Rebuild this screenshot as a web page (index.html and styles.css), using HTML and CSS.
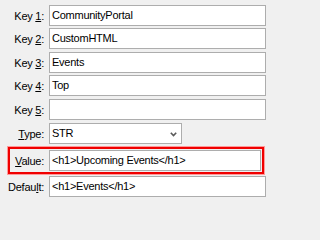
FILE: index.html
```html
<!DOCTYPE html>
<html>
<head>
<meta charset="utf-8">
<link rel="stylesheet" href="styles.css">
</head>
<body>
<div class="form">
  <div class="row"><label class="lbl">Key <u>1</u>:</label><div class="field">CommunityPortal</div></div>
  <div class="row"><label class="lbl">Key <u>2</u>:</label><div class="field">CustomHTML</div></div>
  <div class="row sp3"><label class="lbl">Key <u>3</u>:</label><div class="field">Events</div></div>
  <div class="row"><label class="lbl">Key <u>4</u>:</label><div class="field">Top</div></div>
  <div class="row sp3"><label class="lbl">Key <u>5</u>:</label><div class="field"></div></div>
  <div class="row sp3"><label class="lbl"><u>T</u>ype:</label><div class="field select"><span>STR</span><svg class="chev" width="7" height="5" viewBox="0 0 7 5"><path d="M0.8 0.8 L3.5 3.6 L6.2 0.8" fill="none" stroke="#5a5a5a" stroke-width="1.6"/></svg></div></div>
  <div class="row hl sp3"><label class="lbl"><u>V</u>alue:</label><div class="field">&lt;h1&gt;Upcoming Events&lt;/h1&gt;</div></div>
  <div class="row"><label class="lbl">Defau<u>l</u>t:</label><div class="field">&lt;h1&gt;Events&lt;/h1&gt;</div></div>
</div>
</body>
</html>
```
FILE: styles.css
```css
html, body {
  margin: 0;
  padding: 0;
  background: #f0f0f0;
}
body {
  width: 271px;
  height: 202px;
  overflow: hidden;
  font-family: "Liberation Sans", Arial, sans-serif;
  font-size: 11px;
  letter-spacing: -0.25px;
  color: #000;
}
.form {
  display: flex;
  flex-direction: column;
  gap: 2px;
  padding: 5px 5px 0 0;
}
.row {
  display: flex;
  align-items: center;
  gap: 5px;
}
.row.sp3 {
  margin-top: 1px;
}
.lbl {
  width: 44px;
  flex: none;
  text-align: right;
  white-space: nowrap;
  color: #000;
}
.lbl u {
  text-decoration-thickness: 1px;
  text-underline-offset: 1px;
}
.field {
  flex: 1;
  height: 21px;
  box-sizing: border-box;
  border: 1px solid #adadad;
  background: #fff;
  padding: 0 2px;
  line-height: 19px;
  white-space: nowrap;
  overflow: hidden;
}
.select {
  flex: none;
  width: 133px;
  display: flex;
  align-items: center;
  justify-content: space-between;
  padding-right: 4px;
}
.chev {
  display: block;
  margin-top: 1px;
}
.row.hl {
  margin: 1px 2px 0 8px;
  border: 2px solid #f00000;
  box-shadow: 0 0 0 1px #ff9a9a;
  padding: 1px 1px 1px 0;
}
.row.hl .lbl {
  width: 34px;
}
```
